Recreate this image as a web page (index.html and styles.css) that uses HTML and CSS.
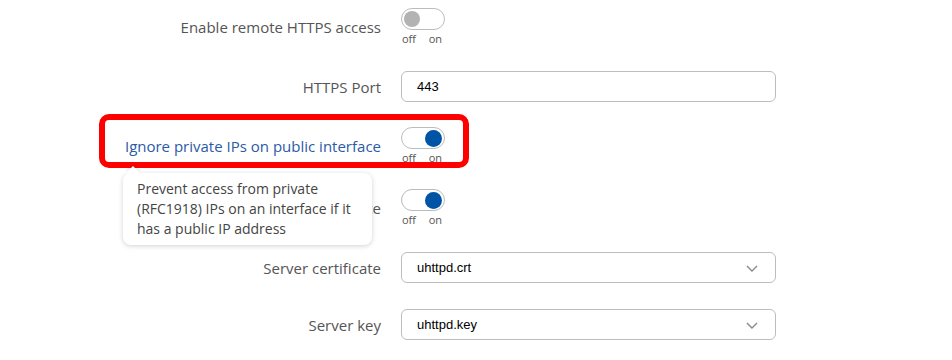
FILE: index.html
```html
<!DOCTYPE html>
<html lang="en">
<head>
    <meta charset="UTF-8">
    <meta name="viewport" content="width=device-width, initial-scale=1.0">
    <title>WebUI access</title>
    <link rel="stylesheet" href="styles.css">
</head>
<body>

<div class="settings">
    <div class="row row-switch">
        <label class="row-label">Enable remote HTTPS access</label>
        <div class="switch-wrap">
            <div class="switch"><span class="knob"></span></div>
            <div class="switch-text"><span>off</span><span>on</span></div>
        </div>
    </div>

    <div class="row row-field">
        <label class="row-label">HTTPS Port</label>
        <input class="text-input" type="text" value="443">
    </div>

    <div class="row row-switch">
        <div class="highlight"></div>
        <label class="row-label row-label-active">Ignore private IPs on public interface</label>
        <div class="switch-wrap">
            <div class="switch switch-on"><span class="knob"></span></div>
            <div class="switch-text"><span>off</span><span>on</span></div>
        </div>
        <div class="tooltip">
            Prevent access from private<br>
            (RFC1918) IPs on an interface if it<br>
            has a public IP address
        </div>
    </div>

    <div class="row row-switch">
        <label class="row-label">Certificate files from device</label>
        <div class="switch-wrap">
            <div class="switch switch-on"><span class="knob"></span></div>
            <div class="switch-text"><span>off</span><span>on</span></div>
        </div>
    </div>

    <div class="row row-field">
        <label class="row-label">Server certificate</label>
        <div class="select">
            <span>uhttpd.crt</span>
            <svg class="chevron" width="12" height="7" viewBox="0 0 12 7">
                <path d="M1 1l5 5 5-5" fill="none" stroke="#888" stroke-width="1.4"/>
            </svg>
        </div>
    </div>

    <div class="row row-field">
        <label class="row-label">Server key</label>
        <div class="select">
            <span>uhttpd.key</span>
            <svg class="chevron" width="12" height="7" viewBox="0 0 12 7">
                <path d="M1 1l5 5 5-5" fill="none" stroke="#888" stroke-width="1.4"/>
            </svg>
        </div>
    </div>
</div>

</body>
</html>
```

FILE: styles.css
```css
* {
    box-sizing: border-box;
}

html, body {
    margin: 0;
    height: 100%;
    overflow: hidden;
    background-color: #fff;
    font-family: "Open Sans", "Noto Sans", sans-serif;
}

.settings {
    margin-top: -4px;
}

.row {
    position: relative;
    display: flex;
    align-items: center;
}

.row-switch {
    height: 62px;
}

.row-field {
    height: 57px;
}

.row-label {
    flex: 0 0 401px;
    padding-right: 20px;
    text-align: right;
    font-size: 15px;
    color: #555;
    white-space: nowrap;
}

.row-label-active {
    color: #2b5aa6;
}

.switch-wrap {
    display: flex;
    flex-direction: column;
    width: 44px;
    margin-top: -1px;
}

.switch {
    position: relative;
    width: 44px;
    height: 22px;
    border: 1px solid #bcbcbc;
    border-radius: 11px;
    background-color: #fff;
}

.knob {
    position: absolute;
    top: 2px;
    left: 2px;
    width: 16px;
    height: 16px;
    border-radius: 50%;
    background-color: #b3b3b3;
}

.switch-on .knob {
    left: auto;
    right: 2px;
    width: 17px;
    height: 17px;
    top: 1.5px;
    background-color: #0054a6;
}

.switch-text {
    display: flex;
    justify-content: space-between;
    margin-top: 3px;
    padding: 0 3px 0 1px;
    font-size: 11px;
    line-height: 12px;
    color: #555;
}

.text-input,
.select {
    width: 375px;
    height: 31px;
    border: 1px solid #bdbdbd;
    border-radius: 6px;
    padding: 0 15px;
    font-family: "Liberation Sans", Arial, sans-serif;
    font-size: 13px;
    color: #000;
    background-color: #fff;
    outline: none;
}

.select {
    display: flex;
    align-items: center;
    justify-content: space-between;
    padding-right: 17px;
}

.chevron {
    display: block;
    margin-top: 2px;
}

.highlight {
    position: absolute;
    top: -1px;
    left: 99px;
    width: 370px;
    height: 54px;
    border: 6px solid #ff0000;
    border-radius: 10px;
    pointer-events: none;
}

.tooltip {
    position: absolute;
    top: 58px;
    left: 123px;
    z-index: 2;
    width: 249px;
    padding: 6px 14px;
    border-radius: 8px;
    background-color: #fff;
    box-shadow: 0 1px 5px rgba(0, 0, 0, 0.18);
    font-size: 14px;
    line-height: 20px;
    color: #444;
    white-space: nowrap;
}

.tooltip::before {
    content: "";
    position: absolute;
    top: -5px;
    left: 5px;
    width: 10px;
    height: 10px;
    background-color: #fff;
    transform: rotate(45deg);
    box-shadow: -2px -2px 3px rgba(0, 0, 0, 0.08);
}
```
